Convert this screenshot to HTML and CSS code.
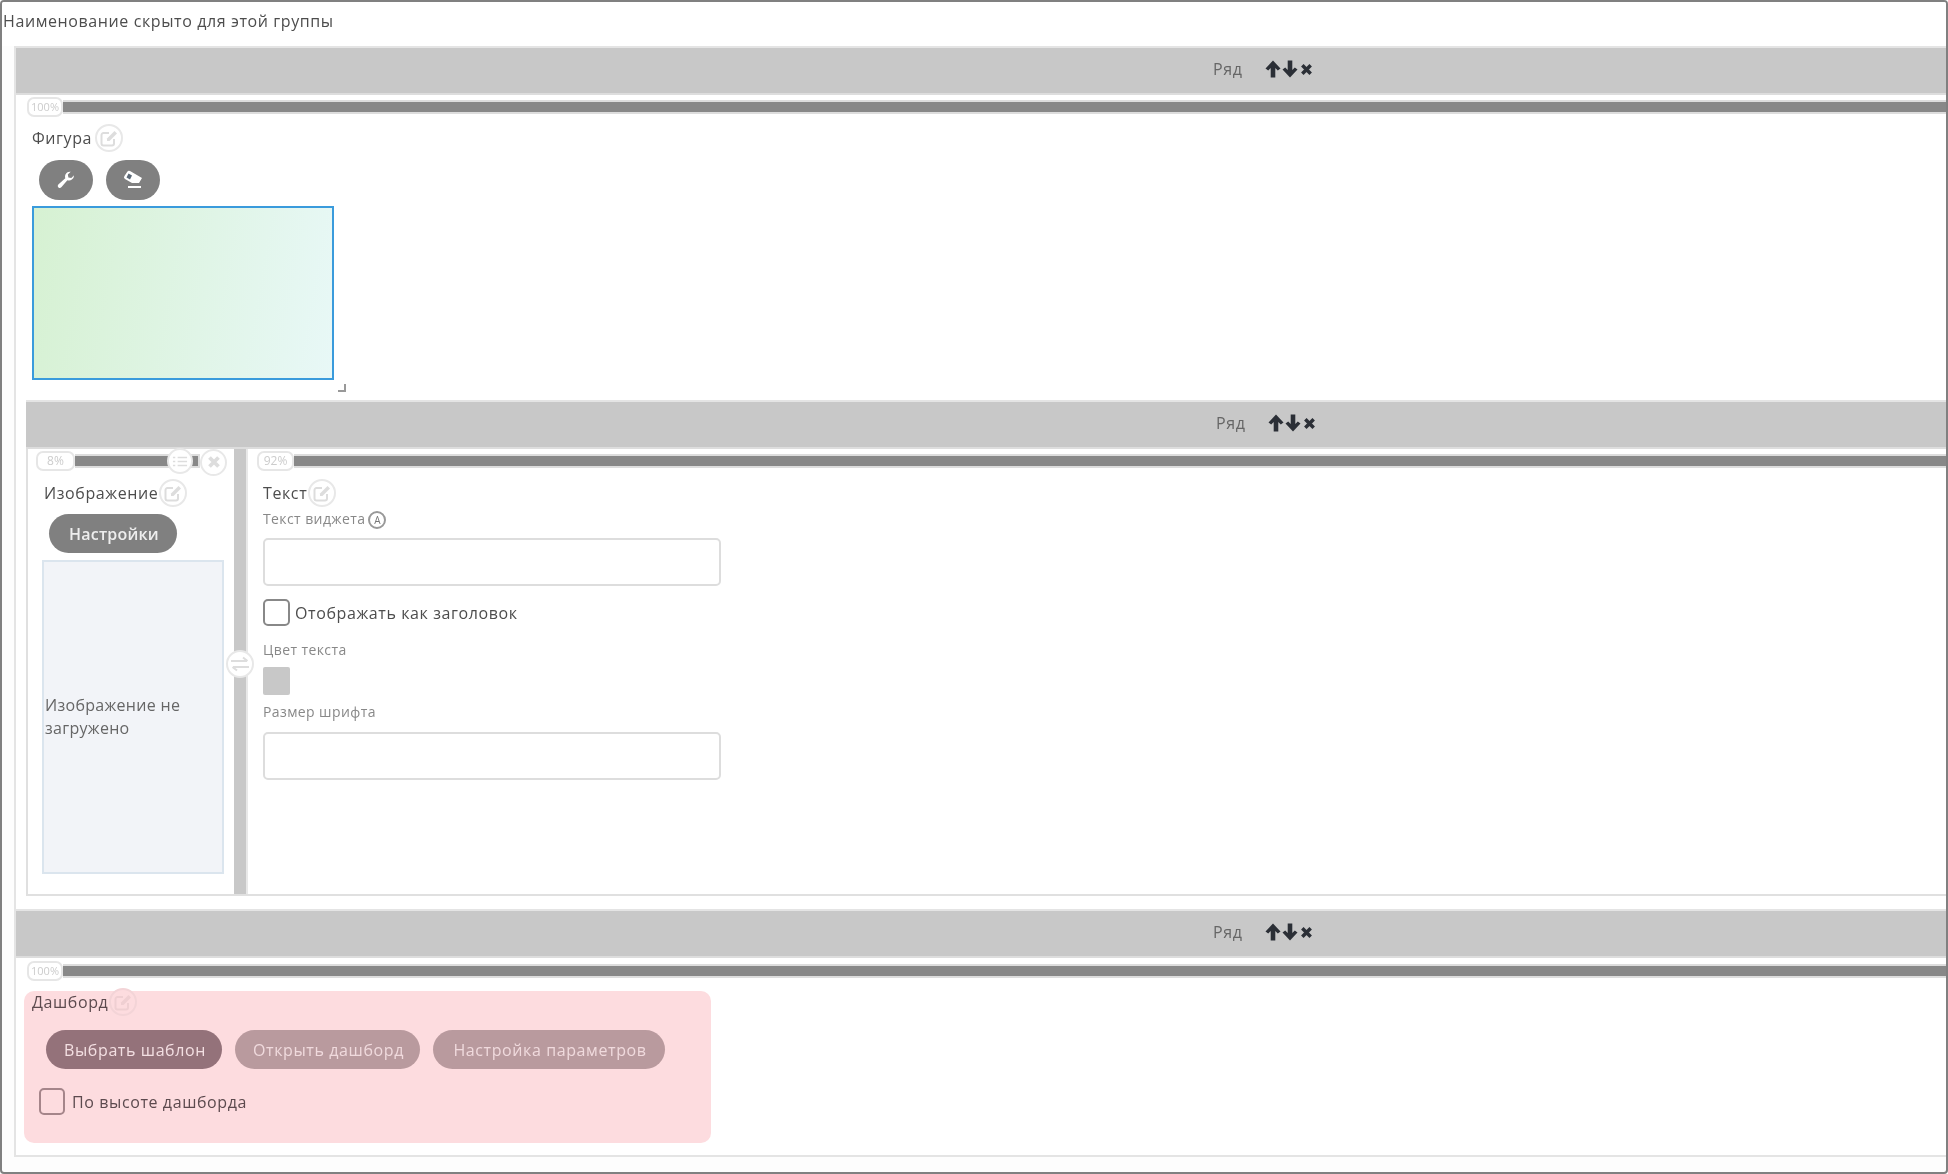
FILE: index.html
```html
<!DOCTYPE html>
<html lang="ru">
<head>
    <meta charset="UTF-8">
    <meta name="viewport" content="width=device-width, initial-scale=1.0">
    <title>Группа виджетов</title>
    <link rel="stylesheet" href="styles.css">
</head>
<body>
    <svg class="sprite" width="0" height="0" aria-hidden="true">
        <symbol id="i-edit" viewBox="0 0 20 20">
            <path d="M15 11v4.500a2 2 0 0 1-2 2H4.500a2 2 0 0 1-2-2V7a2 2 0 0 1 2-2H10" fill="none" stroke="currentColor" stroke-width="2"/>
            <path d="M8 10.500 15.500 3 18 5.500 10.500 13H8z" fill="currentColor"/>
        </symbol>
        <symbol id="i-wrench" viewBox="0 0 20 20">
            <path d="M18 5.500a5 5 0 0 1-6.600 4.700L5.300 17.300a2 2 0 0 1-3-2.700l7-6.300A5 5 0 0 1 14.700 1.700L11.800 4.600l.6 2.900 2.900.6 2.500-2.600z" fill="currentColor"/>
        </symbol>
        <symbol id="i-eraser" viewBox="0 0 22 20">
            <path d="M8 1 20 8 17 13H10L3 9a2 2 0 0 1-.7-2.700L5.300 1.700A2 2 0 0 1 8 1z" fill="currentColor"/>
            <path d="M6.500 3.500 10 5.500 8 9.500 4.500 7.500z" fill="#5d6a78"/>
            <path d="M6 17h13" stroke="currentColor" stroke-width="2"/>
        </symbol>
        <symbol id="i-up" viewBox="0 0 16 18">
            <path d="M8 .5 15.500 8.500 12.800 10.500 10.300 8V17.500H5.700V8L3.200 10.500 .5 8.500z" fill="currentColor"/>
        </symbol>
        <symbol id="i-down" viewBox="0 0 16 18">
            <path d="M8 17.500 .5 9.500 3.200 7.500 5.700 10V.5H10.300V10L12.800 7.500 15.500 9.500z" fill="currentColor"/>
        </symbol>
        <symbol id="i-close" viewBox="0 0 14 14">
            <path d="M2.500 2.500 11.500 11.500M11.500 2.500 2.500 11.500" fill="none" stroke="currentColor" stroke-width="3.800"/>
        </symbol>
        <symbol id="i-swap" viewBox="0 0 20 16">
            <path d="M1 5h16M13 1.500 17.500 5M19 11H3M7 14.500 2.500 11" fill="none" stroke="currentColor" stroke-width="2"/>
        </symbol>
        <symbol id="i-list" viewBox="0 0 20 14">
            <path d="M1 2h3M1 7h3M1 12h3M7 2h12M7 7h12M7 12h12" fill="none" stroke="currentColor" stroke-width="2"/>
        </symbol>
    </svg>

    <div class="frame">
        <div class="group-title">Наименование скрыто для этой группы</div>

        <div class="group">
            <!-- ряд 1 -->
            <div class="row">
                <div class="row-head head-a">
                    <span class="row-name">Ряд</span>
                    <svg class="arrow"><use href="#i-up"/></svg>
                    <svg class="arrow"><use href="#i-down"/></svg>
                    <svg class="cross"><use href="#i-close"/></svg>
                </div>
                <div class="slider slider-full">
                    <span class="badge badge-wide">100%</span>
                    <span class="bar"></span>
                </div>
                <div class="widget">
                    <div class="widget-title title-shape">
                        <span>Фигура</span>
                        <span class="circle"><svg class="edit"><use href="#i-edit"/></svg></span>
                    </div>
                    <div class="tool-row">
                        <button class="tool-btn"><svg class="tool-wrench"><use href="#i-wrench"/></svg></button>
                        <button class="tool-btn"><svg class="tool-eraser"><use href="#i-eraser"/></svg></button>
                    </div>
                    <div class="shape"></div>
                    <div class="resize"></div>
                </div>

                <!-- ряд 2, вложенный -->
                <div class="row nested">
                    <div class="row-head head-b">
                        <span class="row-name">Ряд</span>
                        <svg class="arrow"><use href="#i-up"/></svg>
                        <svg class="arrow"><use href="#i-down"/></svg>
                        <svg class="cross"><use href="#i-close"/></svg>
                    </div>
                    <div class="cols">
                        <div class="col col-left">
                            <div class="slider">
                                <span class="badge badge-small">8%</span>
                                <span class="bar bar-tools">
                                    <span class="circle circle-over"><svg class="list"><use href="#i-list"/></svg></span>
                                </span>
                                <span class="circle circle-close"><svg class="cross-light"><use href="#i-close"/></svg></span>
                            </div>
                            <div class="widget">
                                <div class="widget-title">
                                    <span>Изображение</span>
                                    <span class="circle"><svg class="edit"><use href="#i-edit"/></svg></span>
                                </div>
                                <button class="pill pill-settings">Настройки</button>
                                <div class="no-image">Изображение не загружено</div>
                            </div>
                        </div>
                        <div class="divider">
                            <span class="circle circle-swap"><svg class="swap"><use href="#i-swap"/></svg></span>
                        </div>
                        <div class="col col-right">
                            <div class="slider">
                                <span class="badge badge-mid">92%</span>
                                <span class="bar"></span>
                            </div>
                            <div class="widget widget-text">
                                <div class="widget-title">
                                    <span>Текст</span>
                                    <span class="circle"><svg class="edit"><use href="#i-edit"/></svg></span>
                                </div>
                                <div class="field-label first-label">
                                    <span>Текст виджета</span>
                                    <span class="mark">A</span>
                                </div>
                                <div class="input input-first"></div>
                                <label class="check check-title">
                                    <span class="box"></span>
                                    <span>Отображать как заголовок</span>
                                </label>
                                <div class="field-label color-label">Цвет текста</div>
                                <div class="swatch"></div>
                                <div class="field-label size-label">Размер шрифта</div>
                                <div class="input input-last"></div>
                            </div>
                        </div>
                    </div>
                </div>
            </div>

            <!-- ряд 3 -->
            <div class="row row-last">
                <div class="row-head head-a">
                    <span class="row-name">Ряд</span>
                    <svg class="arrow"><use href="#i-up"/></svg>
                    <svg class="arrow"><use href="#i-down"/></svg>
                    <svg class="cross"><use href="#i-close"/></svg>
                </div>
                <div class="slider slider-full">
                    <span class="badge badge-wide">100%</span>
                    <span class="bar"></span>
                </div>
                <div class="dash">
                    <div class="widget-title dash-title">
                        <span>Дашборд</span>
                        <span class="circle circle-pink"><svg class="edit"><use href="#i-edit"/></svg></span>
                    </div>
                    <div class="dash-btns">
                        <button class="pill dash-main">Выбрать шаблон</button>
                        <button class="pill dash-off">Открыть дашборд</button>
                        <button class="pill dash-off">Настройка параметров</button>
                    </div>
                    <label class="check check-dash">
                        <span class="box box-pink"></span>
                        <span>По высоте дашборда</span>
                    </label>
                </div>
            </div>
        </div>
    </div>
</body>
</html>
```

FILE: styles.css
```css
html, body { margin: 0; padding: 0; background: #fff; }
body { font-family: "Open Sans", Arial, sans-serif; font-size: 16px; letter-spacing: .6px; color: #4d4d4d; }
.sprite { position: absolute; }

.frame { box-sizing: border-box; height: 1174px; border: 2px solid #808080; border-radius: 4px; overflow: hidden; background: #fdfdfd; filter: blur(.4px); }
.group-title { height: 44px; padding: 9px 0 0 1px; box-sizing: border-box; line-height: 20px; background: #fff; }
.group { margin: 0 -20px 0 12px; padding-bottom: 12px; border: 2px solid #e4e4e4; background: #fff; }

.row-head { box-sizing: border-box; display: flex; align-items: center; height: 47px; padding-bottom: 3px; background: #c8c8c8; border-bottom: 2px solid #ddd; }
.head-a { padding-left: 1197px; }
.head-b { height: 49px; padding-left: 1190px; border-top: 2px solid #e4e4e4; }
.row-name { width: 52px; color: #666; }
.arrow { width: 16px; height: 18px; margin-right: 1px; color: #2b2f36; }
.cross { width: 13px; height: 13px; margin-left: 1px; color: #2b2f36; }

.slider { display: flex; align-items: center; height: 20px; margin-top: 2px; padding-left: 8px; }
.slider-full { padding-left: 11px; }
.badge { box-sizing: border-box; flex: none; height: 20px; border: 2px solid #e6e6e6; border-radius: 7px; background: #fff; font-size: 12px; letter-spacing: 0; line-height: 16px; text-align: center; color: #ccc; }
.badge-wide { width: 36px; font-size: 11px; }
.badge-small { width: 39px; }
.badge-mid { width: 37px; }
.bar { box-sizing: border-box; flex: 1; height: 14px; border: 2px solid #ddd; border-left: 0; background: #888; }
.bar-tools { position: relative; }

.circle { box-sizing: border-box; flex: none; display: inline-flex; align-items: center; justify-content: center; width: 28px; height: 28px; margin-left: 1px; border: 2px solid #e8e8e8; border-radius: 50%; background: #fff; color: #ddd; }
.title-shape .circle { margin-left: 3px; }
.circle-over { position: absolute; right: 5px; top: -8px; width: 26px; height: 26px; margin: 0; }
.circle-close { width: 27px; height: 27px; margin: 2px 7px 0 0; }
.circle-swap { position: absolute; left: -8px; top: 201px; margin: 0; }
.circle-pink { background: #fddcdf; border-color: #f3d4d7; color: #efcfd2; }
.edit { width: 20px; height: 20px; }
.list { width: 16px; height: 11px; }
.cross-light { width: 14px; height: 14px; }
.swap { width: 20px; height: 16px; }

.widget { padding-left: 16px; }
.widget-title { display: flex; align-items: center; height: 28px; margin-top: 7px; white-space: nowrap; }
.tool-row { display: flex; gap: 13px; margin: 8px 0 0 7px; }
.tool-btn { display: flex; align-items: center; justify-content: center; width: 54px; height: 40px; padding: 0; border: 0; border-radius: 20px; background: #808080; color: #fff; }
.tool-wrench { width: 20px; height: 20px; }
.tool-eraser { width: 22px; height: 20px; }
.shape { box-sizing: border-box; width: 302px; height: 174px; margin-top: 6px; border: 2px solid #3a9bdc; background: linear-gradient(100deg, #d6f1d2, #e8f8f7); }
.resize { box-sizing: border-box; width: 8px; height: 8px; margin: 4px 0 8px 306px; border-right: 2px solid #999; border-bottom: 2px solid #999; }

.nested { margin-left: 10px; border-left: 2px solid #e0e0e0; border-bottom: 2px solid #e0e0e0; }
.nested .head-b { margin-left: -2px; }
.cols { display: flex; height: 445px; }
.col-left { flex: none; width: 206px; }
.col-right { flex: 1; }
.col .widget-title { margin-top: 8px; }
.divider { position: relative; flex: none; width: 12px; background: #c8c8c8; border-right: 2px solid #e8e8e8; }

.pill { display: block; height: 39px; padding: 0 0 0 2px; border: 0; border-radius: 20px; font-family: inherit; font-size: 16px; letter-spacing: .6px; }
.pill-settings { width: 128px; margin: 7px 0 0 5px; background: #808080; color: #eee; font-weight: 600; letter-spacing: .2px; }
.no-image { box-sizing: border-box; display: flex; align-items: center; width: 182px; height: 314px; margin: 7px 0 0 -2px; padding-left: 1px; border: 2px solid #dbe5ee; background: #f2f4f8; line-height: 23px; letter-spacing: .3px; color: #666; }

.col-right .slider { padding-left: 9px; }
.widget-text { padding-left: 15px; }
.field-label { display: flex; align-items: center; height: 20px; font-size: 14px; letter-spacing: .4px; color: #888; }
.first-label { margin-top: 1px; }
.mark { box-sizing: border-box; width: 18px; height: 18px; margin: 4px 0 0 3px; border: 2px solid #999; border-radius: 50%; font-size: 10px; letter-spacing: 0; line-height: 14px; text-align: center; color: #777; }
.input { box-sizing: border-box; width: 458px; height: 48px; border: 2px solid #ddd; border-radius: 5px; background: #fff; }
.input-first { margin-top: 10px; }
.check { display: flex; align-items: center; }
.check-title { margin-top: 13px; gap: 5px; }
.box { box-sizing: border-box; flex: none; width: 27px; height: 27px; border: 2px solid #888; border-radius: 5px; background: #fff; }
.color-label { margin-top: 13px; }
.swatch { width: 27px; height: 28px; margin-top: 8px; border-radius: 2px; background: #c8c8c8; }
.size-label { margin-top: 6px; }
.input-last { margin-top: 11px; }

.row-last { margin-top: 13px; border-top: 2px solid #e4e4e4; }
.row-last .slider { margin-top: 3px; }
.dash { display: flow-root; box-sizing: border-box; width: 687px; height: 152px; margin: 10px 0 0 8px; padding-left: 8px; border-radius: 10px; background: #fddcdf; color: #5c4a4e; }
.dash-title { margin-top: -3px; position: relative; }
.dash-btns { display: flex; gap: 13px; margin: 14px 0 0 14px; }
.dash-main { width: 176px; background: #94727a; color: #f3dfe2; }
.dash-off { background: #b99a9e; color: #f0dadd; }
.dash-off:nth-child(2) { width: 185px; }
.dash-off:nth-child(3) { width: 232px; }
.check-dash { margin: 19px 0 0 7px; gap: 7px; }
.box-pink { width: 26px; border-color: #a5858a; background: #fddcdf; }
```
